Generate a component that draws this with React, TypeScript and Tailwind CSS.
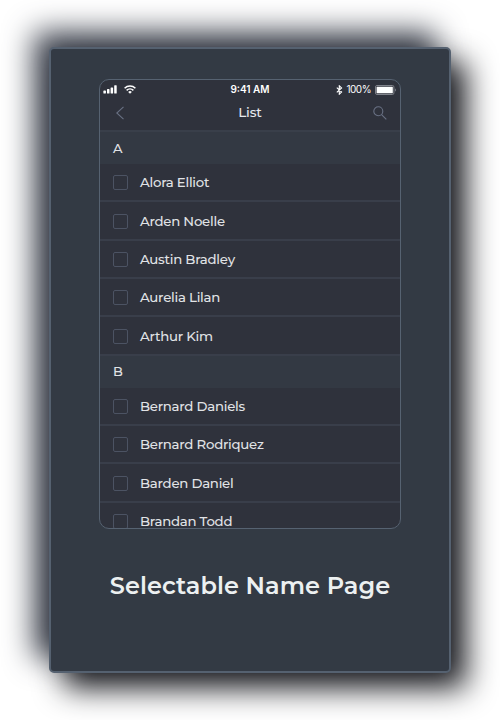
import React from "react";

type Group = { letter: string; people: string[] };

const groups: Group[] = [
  {
    letter: "A",
    people: ["Alora Elliot", "Arden Noelle", "Austin Bradley", "Aurelia Lilan", "Arthur Kim"],
  },
  {
    letter: "B",
    people: ["Bernard Daniels", "Bernard Rodriquez", "Barden Daniel", "Brandan Todd"],
  },
];

function StatusBar() {
  return (
    <div className="flex h-[19px] shrink-0 items-center font-[Inter,sans-serif] text-white">
      <div className="flex flex-1 items-center gap-[7px] pl-[3px]">
        <svg width="14" height="9" viewBox="0 0 14 9" fill="currentColor">
          <rect x="0.4" y="5.6" width="2.5" height="3" rx="0.6" />
          <rect x="4" y="4.1" width="2.5" height="4.5" rx="0.6" />
          <rect x="7.6" y="2.4" width="2.5" height="6.2" rx="0.6" />
          <rect x="11.2" y="0.2" width="2.5" height="8.4" rx="0.6" />
        </svg>
        <svg width="12" height="9" viewBox="0 0 12 9" fill="none" stroke="currentColor" strokeWidth="1.5">
          <path d="M0.6 3.3a7.7 7.7 0 0 1 10.8 0" />
          <path d="M2.6 5.4a4.9 4.9 0 0 1 6.8 0" />
          <path d="M6 8.7 4.2 6.9a2.6 2.6 0 0 1 3.6 0z" fill="currentColor" stroke="none" />
        </svg>
      </div>
      <span className="text-[10px] font-semibold">9:41 AM</span>
      <div className="flex flex-1 items-center justify-end pr-[3px]">
        <svg className="mr-[3px]" width="7" height="10" viewBox="0 0 7 10" fill="none" stroke="currentColor" strokeWidth="1.1">
          <path d="M0.8 2.6 5.6 7.1 3.3 9.2V0.8L5.6 2.9 0.8 7.4" />
        </svg>
        <span className="text-[10px] tracking-[-0.5px]">100%</span>
        <svg className="ml-[4px]" width="22" height="10" viewBox="0 0 22 10">
          <rect x="0.5" y="0.5" width="18.4" height="9" rx="1.4" fill="#2f323b" stroke="#80838b" />
          <rect x="1.6" y="1.7" width="16.2" height="6.6" rx="0.4" fill="#fff" />
          <path d="M20 3.5c1.2.4 1.2 2.6 0 3z" fill="#80838b" />
        </svg>
      </div>
    </div>
  );
}

function Header() {
  return (
    <div className="flex h-[33px] shrink-0 items-center justify-between border-b-2 border-[#393f4a] pr-[13px] pb-[4px] pl-4">
      <svg width="14" height="14" viewBox="0 0 14 14" fill="none" stroke="#697184" strokeWidth="1.1">
        <path d="M7.5 0.8 0.8 7l6.7 6.2" />
      </svg>
      <h1 className="pr-[3px] text-[13.5px] font-medium tracking-[-0.1px] text-[#e6e9ed]">List</h1>
      <svg width="14" height="14" viewBox="0 0 14 14" fill="none" stroke="#697184" strokeWidth="1.1">
        <circle cx="5.3" cy="5.3" r="4.5" />
        <path d="m8.6 8.6 4.7 4.7" />
      </svg>
    </div>
  );
}

export default function App() {
  return (
    <div className="h-[720px] w-[500px] overflow-hidden bg-white pt-[47px] pl-[49px] font-[Montserrat,Inter,sans-serif]">
      <main className="flex h-[626px] w-[402px] flex-col items-center rounded-[5px] border-2 border-[#556170] bg-[#333a44] pt-[30px] shadow-[15px_15px_30px_#191a1f,-15px_-15px_30px_#3a3f4b]">
        <section className="flex h-[450px] w-[302px] shrink-0 flex-col overflow-hidden rounded-[10px] border border-[#566271] bg-[#2f323c]">
          <StatusBar />
          <Header />
          {groups.map((group) => (
            <div key={group.letter} className="shrink-0">
              <h2 className="flex h-8 items-center bg-[#333943] pt-px pl-[13px] text-[13px] font-medium text-[#e1e3e6]">
                {group.letter}
              </h2>
              <ul>
                {group.people.map((name) => (
                  <li key={name} className="flex h-[38.35px] items-center border-b-2 border-[#393e4a] pt-px pl-[12.5px]">
                    <span className="mr-[12.5px] size-[15px] rounded-[2px] border border-[#4c5363]" />
                    <span className="pt-px text-[13.3px] font-medium tracking-[-0.25px] text-[#e1e3e6]">{name}</span>
                  </li>
                ))}
              </ul>
            </div>
          ))}
        </section>
        <p className="mt-[39px] text-[24px] leading-9 font-semibold tracking-[0.05px] whitespace-nowrap text-[#ecf0f1]">
          Selectable Name Page
        </p>
      </main>
    </div>
  );
}
